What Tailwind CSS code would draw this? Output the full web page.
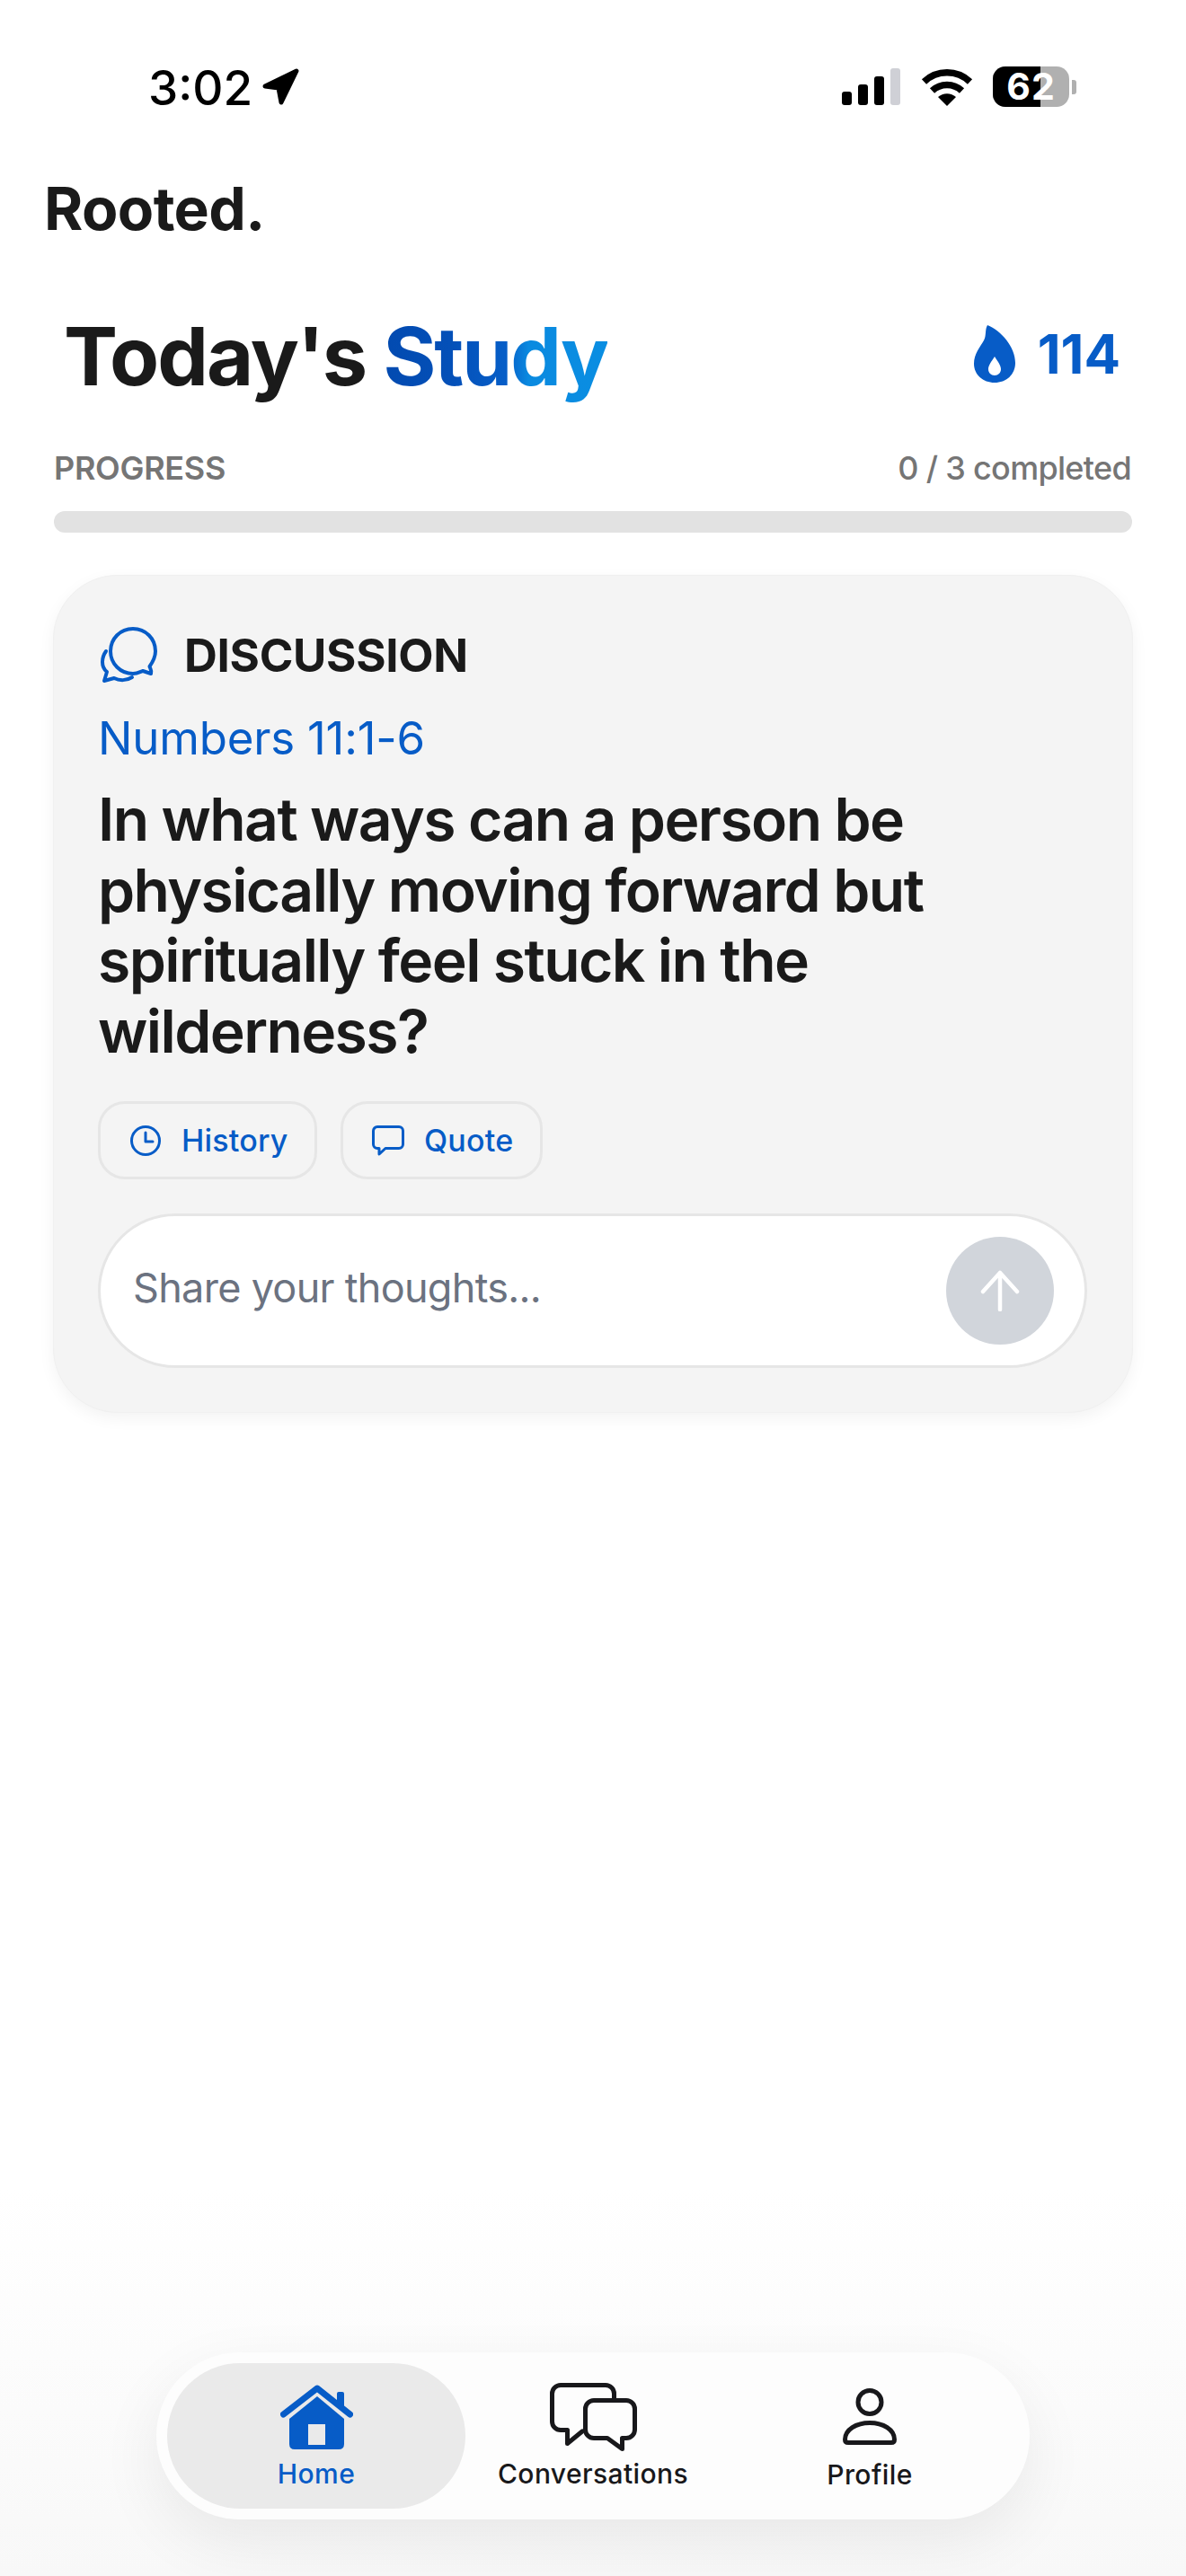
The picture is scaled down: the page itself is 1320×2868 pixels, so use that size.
<!DOCTYPE html>
<html>
<head>
<meta charset="utf-8">
<script src="https://cdn.jsdelivr.net/npm/@tailwindcss/browser@4"></script>
</head>
<body class="m-0">
<div class="w-[1320px] h-[2868px] flex flex-col overflow-hidden bg-linear-to-b from-white from-85% to-[#f8f8f8] text-[#18181b] font-['Inter',sans-serif]">
  <!-- status bar -->
  <div class="flex justify-between items-center pt-[74px] h-[119px] pl-[165px] pr-[122px] text-black">
    <div class="flex items-center gap-[14px]">
      <span class="text-[53px] leading-[45px] font-medium w-[113px] relative top-[2px]">3:02</span>
      <svg class="w-[41px] h-[41px]" viewBox="0 0 41 41"><path d="M3 20 L38 3 L21 38 L18 22 Z" fill="#000" stroke="#000" stroke-width="5" stroke-linejoin="round"/></svg>
    </div>
    <div class="flex items-center">
      <div class="flex items-end gap-[7px] h-[41px]">
        <div class="w-[11px] h-[15px] rounded-[3px] bg-black"></div>
        <div class="w-[11px] h-[23px] rounded-[3px] bg-black"></div>
        <div class="w-[11px] h-[32px] rounded-[3px] bg-black"></div>
        <div class="w-[11px] h-[41px] rounded-[3px] bg-[#cfd0d6]"></div>
      </div>
      <svg class="ml-[23px] w-[58px] h-[42px]" viewBox="0 0 58 42"><path d="M3.5 15 A37 37 0 0 1 54.5 15" fill="none" stroke="#000" stroke-width="7.5"/><path d="M12.5 25 A24 24 0 0 1 45.5 25" fill="none" stroke="#000" stroke-width="7.5"/><path d="M19 32 A15 15 0 0 1 39 32 L29 42 Z" fill="#000"/></svg>
      <div class="ml-[22px] relative w-[85px] h-[45px] rounded-[14px] bg-[#b0b0b0]">
        <div class="w-[53px] h-full rounded-l-[14px] bg-black"></div>
        <span class="absolute inset-0 flex items-center justify-center text-white text-[41px] font-bold leading-none tracking-[1px]">62</span>
      </div>
      <div class="ml-[3px] w-[5px] h-[16px] rounded-r-[3px] bg-[#b0b0b0]"></div>
    </div>
  </div>

  <div class="mt-[75px] ml-[49px] h-[76px] text-[66px] leading-[76px] font-bold tracking-[-0.6px] text-[#1a1a1a]">Rooted.</div>

  <div class="mt-[73px] h-[108px] flex justify-between items-center pl-[71px] pr-[73px]">
    <h1 class="text-[90px] leading-[108px] font-bold tracking-[-2px] text-[#1a1a1a]">Today's <span class="bg-[linear-gradient(90deg,#024ab0_0%,#0450b8_30%,#065ec8_55%,#0a8ae0_65%,#0a8ee2_100%)] bg-clip-text text-transparent">Study</span></h1>
    <div class="flex items-center gap-[25px] text-[#075cc7] relative top-[-3px]">
      <svg class="w-[46px] h-[64px]" viewBox="0 0 46 64"><path fill="#075cc7" fill-rule="evenodd" d="M15 0 C30 6 46 24 46 42 C46 55 36 64 23 64 C10 64 0 55 0 43 C0 32 7 24 11 17 C14 12 12 5 15 0 Z M23 35 C19 41 16 45 16 49 C16 53 19 56 23 56 C27 56 30 53 30 49 C30 45 27 41 23 35 Z"/></svg>
      <span class="text-[60px] leading-[70px] font-bold">114</span>
    </div>
  </div>

  <div class="mt-[48px] h-[44px] flex justify-between items-center pl-[60px] pr-[61px] text-[36px] leading-[44px] font-semibold text-[#757575]">
    <span class="tracking-[-0.3px]">PROGRESS</span>
    <span class="font-medium tracking-[-0.7px]">0 / 3 completed</span>
  </div>
  <div class="mt-[26px] ml-[60px] w-[1200px] h-[24px] rounded-full bg-[#e2e2e2]"></div>

  <!-- card -->
  <section class="mt-[47px] ml-[59px] w-[1202px] h-[933px] rounded-[72px] bg-[#f4f4f4] border border-[#f0f0f0] shadow-[0_6px_18px_rgba(0,0,0,0.05)] pt-[56px] pl-[49px] pr-[50px]">
    <div class="flex items-center h-[65px]">
      <svg class="ml-[3px] w-[63px] h-[63px]" viewBox="0 0 63 63" fill="none" stroke="#075cc7" stroke-width="4" stroke-linecap="round" stroke-linejoin="round"><path d="M54.5 44 C58 39 61 34 61 27 C61 13 50 2 36 2 C22 2 11 13 11 27 C11 41 22 52 36 52 C41 52 44 50 47 49 L56 52 C57 48 55 46 54.5 44 Z"/><path d="M6 27 C1 34 0 44 7 50 L4 60 L15 57 C21 60 29 60 35 56"/></svg>
      <span class="ml-[30px] text-[51px] leading-[60px] font-bold tracking-[-0.3px] text-[#1a1a1a]">DISCUSSION</span>
    </div>
    <div class="mt-[30px] h-[60px] text-[51px] leading-[60px] font-normal tracking-[-0.2px] text-[#075cc7]">Numbers 11:1-6</div>
    <h2 class="mt-[21px] text-[66px] leading-[78.5px] font-semibold tracking-[-1.6px] text-[#1a1a1a] w-[1000px]">In what ways can a person be physically moving forward but spiritually feel stuck in the wilderness?</h2>
    <div class="mt-[39px] flex gap-[26px] text-[#075cc7] text-[34px] leading-[44px] font-medium tracking-[0.2px]">
      <div class="h-[87px] w-[244px] rounded-[30px] border-[3px] border-[#e6e6e6] flex items-center pl-[33px] gap-[23px]">
        <svg class="w-[34px] h-[34px] shrink-0" viewBox="0 0 34 34" fill="none" stroke="#075cc7" stroke-width="3" stroke-linecap="round" stroke-linejoin="round"><circle cx="17" cy="17" r="15.5"/><path d="M17 8 V18 H25"/></svg>
        <span>History</span>
      </div>
      <div class="h-[87px] w-[225px] rounded-[30px] border-[3px] border-[#e6e6e6] flex items-center pl-[32px] gap-[22px]">
        <svg class="w-[36px] h-[34px] shrink-0" viewBox="0 0 36 34" fill="none" stroke="#075cc7" stroke-width="3" stroke-linecap="round" stroke-linejoin="round"><path d="M6 1.5 H30 A4.5 4.5 0 0 1 34.5 6 V21 A4.5 4.5 0 0 1 30 25.5 H15 L8 32 V25.5 H6 A4.5 4.5 0 0 1 1.5 21 V6 A4.5 4.5 0 0 1 6 1.5 Z"/></svg>
        <span>Quote</span>
      </div>
    </div>
    <div class="mt-[38px] h-[172px] w-[1101px] rounded-[86px] bg-white border-[3px] border-[#e6e6e6] flex items-center justify-between pl-[36px] pr-[34px]">
      <span class="text-[45px] leading-[60px] tracking-[-0.7px] text-[#6b7280] relative top-[-3px]">Share your thoughts...</span>
      <div class="w-[120px] h-[120px] rounded-full bg-[#d1d5db] flex items-center justify-center">
        <svg class="w-[44px] h-[46px]" viewBox="0 0 44 46" fill="none" stroke="#fff" stroke-width="4.5" stroke-linecap="round" stroke-linejoin="round"><path d="M22 44 V3 M3 24 L22 3 L41 24"/></svg>
      </div>
    </div>
  </section>

  <!-- tab bar -->
  <nav class="mt-auto mb-[63px] ml-[174px] w-[972px] h-[186px] rounded-[93px] bg-[#fdfdfd] shadow-[0_24px_70px_rgba(0,0,0,0.07)] p-[12px] grid grid-cols-[332px_284px_332px] text-[30px] leading-[36px] font-medium tracking-[0.4px]">
    <div class="h-[162px] rounded-[81px] bg-[#eaeaea] flex flex-col items-center pt-[24px] text-[#075cc7]">
      <svg class="w-[81px] h-[72px]" viewBox="0 0 81 72"><path d="M3.5 33 L41 4 L77.5 33" fill="none" stroke="#075cc7" stroke-width="7" stroke-linecap="round" stroke-linejoin="round"/><rect x="63" y="8" width="8" height="18" rx="2" fill="#075cc7"/><path d="M41 13 L10 38 V66 Q10 72 16 72 H65 Q71 72 71 66 V38 Z" fill="#075cc7"/><rect x="31" y="44" width="19" height="23" fill="#eaeaea"/></svg>
      <span class="mt-[9px]">Home</span>
    </div>
    <div class="h-[162px] flex flex-col items-center pt-[22px]">
      <svg class="w-[97px] h-[76px]" viewBox="0 0 97 76" fill="none" stroke="#18181b" stroke-width="5" stroke-linecap="round" stroke-linejoin="round"><path d="M71.5 17 V12 A9.5 9.5 0 0 0 62 2.5 H12 A9.5 9.5 0 0 0 2.5 12 V43 A9.5 9.5 0 0 0 12 52.5 H19.5 V67.5 L36 54"/><path d="M49 19.5 H85 A9.5 9.5 0 0 1 94.5 29 V52 A9.5 9.5 0 0 1 85 61.5 H80.5 V73.5 L64 61.5 H49 A9.5 9.5 0 0 1 39.5 52 V29 A9.5 9.5 0 0 1 49 19.5 Z"/></svg>
      <span class="mt-[7px]">Conversations</span>
    </div>
    <div class="h-[162px] flex flex-col items-center pt-[28px]">
      <svg class="w-[60px] h-[63px]" viewBox="0 0 60 63" fill="none" stroke="#18181b" stroke-width="5" stroke-linecap="round" stroke-linejoin="round"><circle cx="30" cy="15.5" r="13"/><path d="M2.5 57 C2.5 46 15 38.5 30 38.5 C45 38.5 57.5 46 57.5 57 Q57.5 60.5 54 60.5 H6 Q2.5 60.5 2.5 57 Z"/></svg>
      <span class="mt-[15px]">Profile</span>
    </div>
  </nav>
</div>
</body>
</html>
